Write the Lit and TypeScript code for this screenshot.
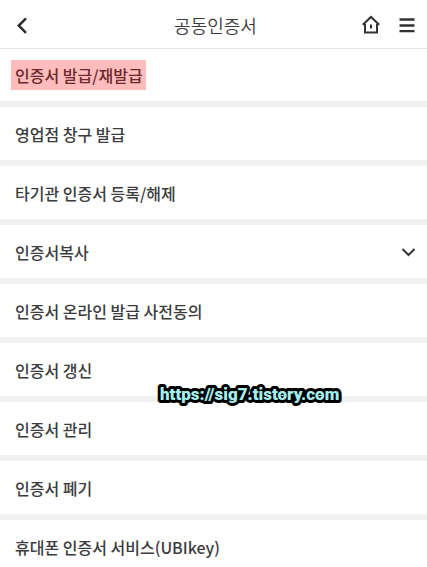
import { LitElement, html, css } from "lit";
import { customElement, state } from "lit/decorators.js";

interface MenuItem {
  label: string;
  highlighted?: boolean;
  expandable?: boolean;
}

const ITEMS: MenuItem[] = [
  { label: "인증서 발급/재발급", highlighted: true },
  { label: "영업점 창구 발급" },
  { label: "타기관 인증서 등록/해제" },
  { label: "인증서복사", expandable: true },
  { label: "인증서 온라인 발급 사전동의" },
  { label: "인증서 갱신" },
  { label: "인증서 관리" },
  { label: "인증서 폐기" },
  { label: "휴대폰 인증서 서비스(UBIkey)" },
];

@customElement("app-root")
export class AppRoot extends LitElement {
  @state() private expanded = false;

  static styles = css`
    :host {
      display: block;
      position: relative;
      height: 100vh;
      overflow: hidden;
      background: #fff;
      color: #3c3c3e;
      font-family: "Noto Sans CJK KR", sans-serif;
    }
    button {
      margin: 0;
      padding: 0;
      border: 0;
      background: none;
      color: inherit;
      font: inherit;
      cursor: pointer;
    }
    svg {
      display: block;
    }
    .bar {
      display: grid;
      grid-template-columns: 1fr auto 1fr;
      align-items: center;
      box-sizing: border-box;
      height: 48px;
      padding: 2px 8px 0 12px;
      box-shadow: 0 1px #e6e6e6;
    }
    .title {
      margin: 0;
      font-size: 18px;
      line-height: 24px;
      font-weight: 350;
    }
    .back {
      justify-self: start;
    }
    .actions {
      justify-self: end;
      display: flex;
      gap: 12px;
    }
    .list {
      margin: 0;
      padding: 0;
      list-style: none;
    }
    .item {
      border-bottom: 6px solid #f1f1f1;
    }
    .item:last-child {
      border-bottom: 0;
    }
    .row {
      display: flex;
      align-items: center;
      justify-content: space-between;
      box-sizing: border-box;
      width: 100%;
      height: 53px;
      padding: 1px 8px 0 11px;
      font-size: 16px;
      line-height: 30px;
      font-weight: 500;
      text-align: left;
    }
    .label {
      padding: 0 3px 0 4px;
    }
    .marked {
      background: #ffbcbc;
      color: #6b292c;
    }
    .flip {
      transform: rotate(180deg);
    }
    .mark {
      position: absolute;
      left: 155px;
      top: 380px;
    }
    .mark-text {
      font-family: Roboto, sans-serif;
      font-size: 17px;
      font-weight: 900;
      fill: #a5eeee;
      stroke: #000;
      stroke-width: 6px;
      stroke-linejoin: round;
      paint-order: stroke;
    }
  `;

  private toggle(item: MenuItem) {
    if (item.expandable) this.expanded = !this.expanded;
  }

  private chevron() {
    return html`<svg class=${this.expanded ? "flip" : ""} width="22" height="22" viewBox="0 0 22 22" fill="none" stroke="#333336" stroke-width="2" aria-hidden="true">
      <path d="M5.5 8l6 6 6-6" />
    </svg>`;
  }

  render() {
    return html`
      <header class="bar">
        <button class="back" aria-label="뒤로">
          <svg width="20" height="24" viewBox="0 0 20 24" fill="none" stroke="#2c2c2e" stroke-width="2.5">
            <path d="M14 5.4L6.8 12.6l7.2 7.2" />
          </svg>
        </button>
        <h1 class="title">공동인증서</h1>
        <div class="actions">
          <button aria-label="홈">
            <svg width="24" height="24" viewBox="0 0 24 24" fill="none" stroke="#333336" stroke-width="2">
              <path d="M3.8 11.8L12 4l8.2 7.8" />
              <path d="M3.8 11.4h3M17.2 11.4h3" stroke-width="1.4" />
              <path d="M6 11v8.4h12V11" />
              <path d="M12 11.4v4" />
            </svg>
          </button>
          <button aria-label="전체 메뉴">
            <svg width="24" height="24" viewBox="0 0 24 24" fill="none" stroke="#333336" stroke-width="2.3">
              <path d="M4.5 6.5h15M4.5 12.5h15M4.5 18.2h15" />
            </svg>
          </button>
        </div>
      </header>
      <ul class="list">
        ${ITEMS.map(
          (item) => html`<li class="item">
            <button class="row" @click=${() => this.toggle(item)}>
              <span class="label ${item.highlighted ? "marked" : ""}">${item.label}</span>
              ${item.expandable ? this.chevron() : null}
            </button>
          </li>`
        )}
      </ul>
      <a class="mark" href="https://sig7.tistory.com">
        <svg width="210" height="30">
          <text class="mark-text" x="5" y="20">https://sig7.tistory.com</text>
        </svg>
      </a>
    `;
  }
}
